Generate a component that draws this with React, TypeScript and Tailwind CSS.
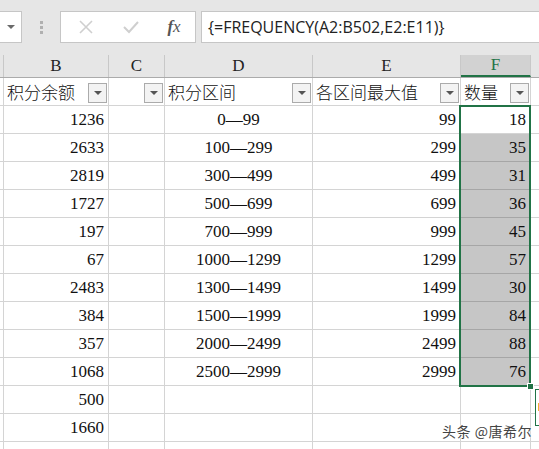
import React from 'react';

const serif = { fontFamily: '"Liberation Serif", "Noto Sans CJK SC", serif' };

const cols = [
  { key: 'A', w: 4 },
  { key: 'B', w: 105 },
  { key: 'C', w: 56 },
  { key: 'D', w: 148 },
  { key: 'E', w: 148 },
  { key: 'F', w: 70 },
  { key: 'G', w: 40 },
];

const bVals = ['1236', '2633', '2819', '1727', '197', '67', '2483', '384', '357', '1068', '500', '1660', ''];
const dVals = ['0—99', '100—299', '300—499', '500—699', '700—999', '1000—1299', '1300—1499', '1500—1999', '2000—2499', '2500—2999'];
const eVals = ['99', '299', '499', '699', '999', '1299', '1499', '1999', '2499', '2999'];
const fVals = ['18', '35', '31', '36', '45', '57', '30', '84', '88', '76'];

const FilterBtn = () => (
  <div className="absolute right-[1px] top-[5px] w-[19px] h-[20px] border border-[#ababab] bg-[#f3f3f3] flex items-center justify-center">
    <svg width="8" height="5" viewBox="0 0 8 5">
      <path d="M0 0 L8 0 L4 4 Z" fill="#555" />
    </svg>
  </div>
);

export default function App() {
  return (
    <div className="w-[539px] h-[449px] overflow-hidden bg-white relative select-none">
      {/* formula bar */}
      <div className="h-[55px] bg-[#e6e6e6] flex items-start pt-[11px] relative">
        <div className="w-[22px] h-[32px] bg-white border border-[#c6c6c6] border-l-0 flex items-center justify-center">
          <svg width="8" height="5" viewBox="0 0 8 5">
            <path d="M0 0 L8 0 L4 4 Z" fill="#6a6a6a" />
          </svg>
        </div>
        <div className="w-[38px] h-[32px] flex flex-col items-center justify-center gap-[2px]">
          <div className="w-[3px] h-[3px] bg-[#b0b0b0]" />
          <div className="w-[3px] h-[3px] bg-[#b0b0b0]" />
          <div className="w-[3px] h-[3px] bg-[#b0b0b0]" />
        </div>
        <div className="w-[136px] h-[32px] bg-white border border-[#c6c6c6] flex items-center">
          <div className="w-[45px] flex justify-center pl-[4px]">
            <svg width="14" height="14" viewBox="0 0 14 14">
              <path d="M1 1 L13 13 M13 1 L1 13" stroke="#cfcfcf" strokeWidth="1.6" />
            </svg>
          </div>
          <div className="w-[45px] flex justify-center pl-[4px]">
            <svg width="16" height="14" viewBox="0 0 16 14">
              <path d="M1 7 L6 12 L15 2" stroke="#cfcfcf" strokeWidth="2" fill="none" />
            </svg>
          </div>
          <div className="flex-1 flex justify-center pl-[2px] text-[17px] italic text-[#555]" style={{ fontFamily: '"Liberation Serif", serif' }}>
            <span className="font-bold">f</span><span>x</span>
          </div>
        </div>
        <div className="flex-1 h-[32px] ml-[5px] bg-white border border-[#c6c6c6] border-r-0 flex items-center pl-[6px] text-[16px] text-[#222]" style={{ fontFamily: '"Open Sans", "Liberation Sans", sans-serif' }}>
          {'{=FREQUENCY(A2:B502,E2:E11)}'}
        </div>
      </div>

      {/* column headers */}
      <div className="flex h-[23px] bg-[#e6e6e6] border-b border-[#ababab]">
        {cols.map((c) => (
          <div
            key={c.key}
            style={{ width: c.w, ...serif }}
            className={
              'shrink-0 flex items-center justify-center text-[17px] border-r border-[#c8c8c8] ' +
              (c.key === 'F' ? 'bg-[#d2d2d2] text-[#217346] border-b-2 border-b-[#217346]' : 'text-[#222]')
            }
          >
            {c.key === 'A' || c.key === 'G' ? '' : c.key}
          </div>
        ))}
      </div>

      {/* grid */}
      <div className="relative" style={serif}>
        {/* header row */}
        <div className="flex h-[28px]">
          {cols.map((c) => {
            const label =
              c.key === 'B' ? '积分余额' : c.key === 'D' ? '积分区间' : c.key === 'E' ? '各区间最大值' : c.key === 'F' ? '数量' : '';
            const hasFilter = ['B', 'C', 'D', 'E', 'F'].includes(c.key);
            return (
              <div
                key={c.key}
                style={{ width: c.w }}
                className="shrink-0 relative border-r border-b border-[#d4d4d4] flex items-center pl-[3px] text-[17px] text-[#111] overflow-hidden whitespace-nowrap"
              >
                <span style={{ fontFamily: '"Noto Sans CJK SC", serif' }} className="font-light">{label}</span>
                {hasFilter && <FilterBtn />}
              </div>
            );
          })}
        </div>

        {bVals.map((b, i) => {
          const inSel = i < 10;
          const shaded = i >= 1 && i < 10;
          return (
            <div key={i} className="flex h-[28px] text-[17px] text-[#111]">
              <div style={{ width: 4 }} className="shrink-0 border-r border-b border-[#d4d4d4]" />
              <div style={{ width: 105 }} className="shrink-0 border-r border-b border-[#d4d4d4] flex items-center justify-end pr-[4px]">{b}</div>
              <div style={{ width: 56 }} className="shrink-0 border-r border-b border-[#d4d4d4]" />
              <div style={{ width: 148 }} className="shrink-0 border-r border-b border-[#d4d4d4] flex items-center justify-center">{dVals[i] ?? ''}</div>
              <div style={{ width: 148 }} className="shrink-0 border-r border-b border-[#d4d4d4] flex items-center justify-end pr-[4px]">{eVals[i] ?? ''}</div>
              <div
                style={{ width: 70 }}
                className={
                  'shrink-0 border-r border-b flex items-center justify-end pr-[4px] ' +
                  (shaded ? 'bg-[#c6c6c6] border-[#a6a6a6]' : 'border-[#d4d4d4]')
                }
              >
                {inSel ? fVals[i] : ''}
              </div>
              <div style={{ width: 40 }} className="shrink-0 border-r border-b border-[#d4d4d4]" />
            </div>
          );
        })}

        {/* selection outline */}
        <div className="absolute left-[459px] top-[27px] w-[72px] h-[282px] border-2 border-[#217346] pointer-events-none" />
        <div className="absolute left-[527px] top-[305px] w-[7px] h-[7px] bg-[#217346] border border-white" />
        {/* quick analysis tab */}
        <div className="absolute left-[535px] top-[311px] w-[10px] h-[37px] bg-white border border-[#217346]">
          <div className="ml-[2px] mt-[13px] w-[3px] h-[8px] bg-[#f2b134]" />
        </div>

        {/* watermark */}
        <div
          className="absolute left-[442px] top-[343px] text-[14px] text-[#444] tracking-[0.5px]"
          style={{ fontFamily: '"Noto Sans CJK SC", sans-serif', textShadow: '0 0 2px #fff, 0 0 2px #fff' }}
        >
          头条 @唐希尔
        </div>
      </div>
    </div>
  );
}
